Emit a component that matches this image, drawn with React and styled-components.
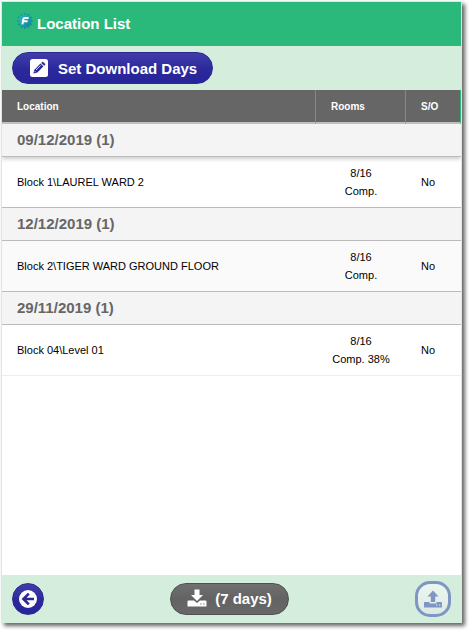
import React, { Component, Fragment } from 'react'
import styled, { createGlobalStyle } from 'styled-components'

const groups = [
  { date: '09/12/2019', items: [{ name: 'Block 1\\LAUREL WARD 2', rooms: '8/16', comp: 'Comp.', so: 'No' }] },
  { date: '12/12/2019', items: [{ name: 'Block 2\\TIGER WARD GROUND FLOOR', rooms: '8/16', comp: 'Comp.', so: 'No' }] },
  { date: '29/11/2019', items: [{ name: 'Block 04\\Level 01', rooms: '8/16', comp: 'Comp. 38%', so: 'No' }] },
]

const teeth = [0, 30, 60, 90, 120, 150, 180, 210, 240, 270, 300, 330]

const GearLogo = () => (
  <svg width="16" height="16" viewBox="0 0 16 16" aria-hidden="true">
    <defs>
      <linearGradient id="gear" x1="0" y1="0" x2="1" y2="1">
        <stop offset="0" stopColor="#2fc0c6" />
        <stop offset="1" stopColor="#0b7f93" />
      </linearGradient>
    </defs>
    {teeth.map(a => (
      <rect key={a} x="7" y="0.3" width="2" height="4" fill="#1590a0" transform={`rotate(${a} 8 8)`} />
    ))}
    <circle cx="8" cy="8" r="6.5" fill="url(#gear)" />
    <path d="M11.6 5H7.8Q6.6 5 6.3 6.4L5.4 11.4M6.2 8.2H10.6" fill="none" stroke="#fff" strokeWidth="2" />
  </svg>
)

const EditIcon = () => (
  <svg width="18" height="18" viewBox="0 0 18 18" aria-hidden="true">
    <rect width="18" height="18" rx="2.5" fill="#fff" />
    <path d="M3.4 14.6L4.2 10.9L10.5 4.6L13.4 7.5L7.1 13.8Z" fill="#2c2a92" />
    <path d="M11.2 3.9L12.2 2.9Q12.7 2.5 13.2 2.9L15.1 4.8Q15.5 5.3 15.1 5.8L14.1 6.8Z" fill="#2c2a92" />
    <path d="M6 11L10.6 6.4M4.7 12.2L5.8 13.3" stroke="#fff" strokeWidth="0.8" />
  </svg>
)

const BackIcon = () => (
  <svg width="18" height="18" viewBox="0 0 18 18" aria-hidden="true">
    <circle cx="9" cy="9" r="9" fill="#fff" />
    <path d="M9.8 3.6L4.4 9L9.8 14.4M4.6 9H15" fill="none" stroke="#2c2a92" strokeWidth="2.6" />
  </svg>
)

const DownloadIcon = () => (
  <svg width="20" height="18" viewBox="0 0 20 18" aria-hidden="true">
    <path d="M7.5 0.5H12.5V6H16L10 12L4 6H7.5Z" fill="#fff" />
    <path d="M1.5 11.5H7L10 14L13 11.5H18.5Q19.5 11.5 19.5 12.5V17.5H0.5V12.5Q0.5 11.5 1.5 11.5Z" fill="#fff" />
    <path d="M13.3 15H14.5M16.3 15H17.5" stroke="#666" strokeWidth="1.2" />
  </svg>
)

const UploadIcon = () => (
  <svg width="20" height="18" viewBox="0 0 20 18" aria-hidden="true">
    <path d="M10 0.5L15.5 6.5H12.2V12H7.8V6.5H4.5Z" fill="#2c3faa" />
    <path d="M1.5 12H6.5V13.5H13.5V12H18Q19 12 19 13V17.5H1V13Q1 12 1.5 12Z" fill="#2c3faa" />
    <path d="M13 15H14.3M16 15H17.3" stroke="#fff" strokeWidth="1.2" />
  </svg>
)

class App extends Component {
  render() {
    const list = groups.map((g, i) => (
      <Fragment key={g.date}>
        <tr>
          <GroupCell colSpan="3" scope="rowgroup" $raised={i === 0}>
            {g.date} ({g.items.length})
          </GroupCell>
        </tr>
        {g.items.map(t => (
          <Row key={t.name} $odd={i % 2 === 1} $last={i === groups.length - 1}>
            <Cell>{t.name}</Cell>
            <Cell $center>{t.rooms}<br />{t.comp}</Cell>
            <Cell>{t.so}</Cell>
          </Row>
        ))}
      </Fragment>)
    )
    return (
      <Page>
        <GlobalStyle />
        <Frame>
          <Header>
            <GearLogo />
            <Title>Location List</Title>
          </Header>
          <Toolbar>
            <PillButton type="button"><EditIcon />Set Download Days</PillButton>
          </Toolbar>
          <Main>
            <Table>
              <thead>
                <tr>
                  <HeadCell scope="col">Location</HeadCell>
                  <HeadCell scope="col" $width="90px">Rooms</HeadCell>
                  <HeadCell scope="col" $width="55px">S/O</HeadCell>
                </tr>
              </thead>
              <tbody>{list}</tbody>
            </Table>
          </Main>
          <Footer>
            <RoundButton type="button" aria-label="Back"><BackIcon /></RoundButton>
            <GreyButton type="button"><DownloadIcon />(7 days)</GreyButton>
            <UploadButton type="button" aria-label="Upload" disabled><UploadIcon /></UploadButton>
          </Footer>
        </Frame>
      </Page>
    )
  }
}

export default App

const GlobalStyle = createGlobalStyle`
  * {
    box-sizing: border-box;
  }
  body {
    margin: 0;
    background: white;
    font-family: "Liberation Sans", Arial, sans-serif;
  }
`

const Page = styled.div`
  display: flex;
  min-height: 100vh;
  padding: 1px 7px 7px 1px;
`

const Frame = styled.div`
  flex: 1;
  display: flex;
  flex-direction: column;
  border: 1px solid #e3e3e3;
  border-bottom: 0;
  background: white;
  box-shadow: 3px 3px 4px rgba(0, 0, 0, 0.6);
`

const Header = styled.header`
  display: flex;
  gap: 4px;
  height: 44px;
  padding: 11px 15px;
  background: #2ab97a;
`

const Title = styled.h1`
  margin: 0;
  font-size: 15px;
  line-height: 22px;
  color: white;
`

const Toolbar = styled.div`
  display: flex;
  align-items: center;
  height: 44px;
  padding: 0 10px;
  background: #d5eddd;
`

const Main = styled.main`
  flex: 1;
`

const Table = styled.table`
  width: 100%;
  border-spacing: 0;
  font-size: 11px;
  color: black;
`

const HeadCell = styled.th`
  width: ${p => p.$width || 'auto'};
  height: 34px;
  padding: 0 15px;
  border-right: 1px solid #2ab97a;
  border-bottom: 2px solid #c0c0c0;
  background: #666;
  background-clip: padding-box;
  color: white;
  font-size: 10px;
  text-align: left;
`

const GroupCell = styled.th`
  height: 33px;
  padding: 0 15px 2px;
  border-bottom: 1px solid #bbb;
  background: #f4f4f4;
  box-shadow: ${p => p.$raised ? '0 2px 4px rgba(0, 0, 0, 0.2)' : 'none'};
  clip-path: inset(0 0 -6px 0);
  color: #666;
  font-size: 15px;
  text-align: left;
`

const Cell = styled.td`
  height: 51px;
  padding: 0 15px;
  line-height: 18px;
  text-align: ${p => p.$center ? 'center' : 'left'};
  white-space: nowrap;
`

const Row = styled.tr`
  background: ${p => p.$odd ? '#fafafa' : 'transparent'};

  ${Cell} {
    border-bottom: 1px solid ${p => p.$last ? '#eee' : '#bbb'};
  }
`

const Footer = styled.footer`
  display: flex;
  align-items: center;
  justify-content: space-between;
  height: 48px;
  padding: 0 10px;
  background: #d5eddd;
`

const PillButton = styled.button`
  display: flex;
  align-items: center;
  gap: 10px;
  height: 32px;
  padding: 0 15px 0 17px;
  border: 1px solid #2c2a92;
  border-radius: 16px;
  background: linear-gradient(#413eaa, #2b289c 55%, #28259a);
  color: white;
  font-family: inherit;
  font-size: 15px;
  font-weight: bold;
`

const GreyButton = styled(PillButton)`
  gap: 8px;
  padding: 0 16px 2px;
  border-color: #505050;
  background: linear-gradient(#707070, #636363 50%, #686868);
`

const RoundButton = styled(PillButton)`
  justify-content: center;
  width: 32px;
  padding: 0;
`

const UploadButton = styled(RoundButton)`
  width: 36px;
  height: 36px;
  border: 3px solid #2c3faa;
  border-radius: 15px;
  background: linear-gradient(white, #f4f7f8 50%, #dfe9ea);
  opacity: 0.5;
`
